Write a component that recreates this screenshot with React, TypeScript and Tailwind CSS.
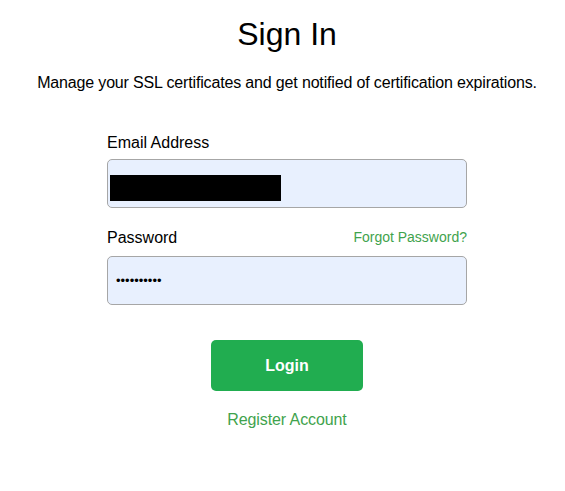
import React from "react";

const font = { fontFamily: '"Liberation Sans", Arial, sans-serif' };

export default function App() {
  return (
    <div className="min-h-screen bg-white text-black" style={font}>
      <div className="flex flex-col items-center pt-[15px] pl-[9px]">
        <h1 className="text-[32px] leading-[38px]">Sign In</h1>
        <p className="mt-[18px] text-[16px] leading-[24px] tracking-[-0.16px]">
          Manage your SSL certificates and get notified of certification expirations.
        </p>

        <form className="mt-[36px] w-[360px] flex flex-col" onSubmit={(e) => e.preventDefault()}>
          <label className="text-[16px] leading-[24px]">Email Address</label>
          <div className="mt-[4px] h-[49px] rounded-[5px] border border-[#a6a6a6] bg-[#e8f0fe] flex items-center px-[2px]">
            <div className="mt-[8px] h-[26px] w-[171px] bg-black" />
          </div>

          <div className="mt-[18px] flex items-center justify-between">
            <label className="text-[16px] leading-[24px]">Password</label>
            <a href="#" className="text-[14px] leading-[20px] text-[#3fa34d] -mt-[2px]">
              Forgot Password?
            </a>
          </div>
          <input
            type="password"
            readOnly
            value="abcdefghij"
            className="mt-[6px] h-[49px] rounded-[5px] border border-[#a6a6a6] bg-[#e8f0fe] px-[8px] text-[13px] outline-none"
          />

          <div className="mt-[35px] flex justify-center">
            <button
              type="submit"
              className="h-[51px] w-[152px] rounded-[5px] bg-[#21ad50] text-[16px] font-bold text-white"
            >
              Login
            </button>
          </div>
          <div className="mt-[17px] flex justify-center">
            <a href="#" className="text-[16px] leading-[24px] text-[#3fa34d] tracking-[-0.1px]">
              Register Account
            </a>
          </div>
        </form>
      </div>
    </div>
  );
}
